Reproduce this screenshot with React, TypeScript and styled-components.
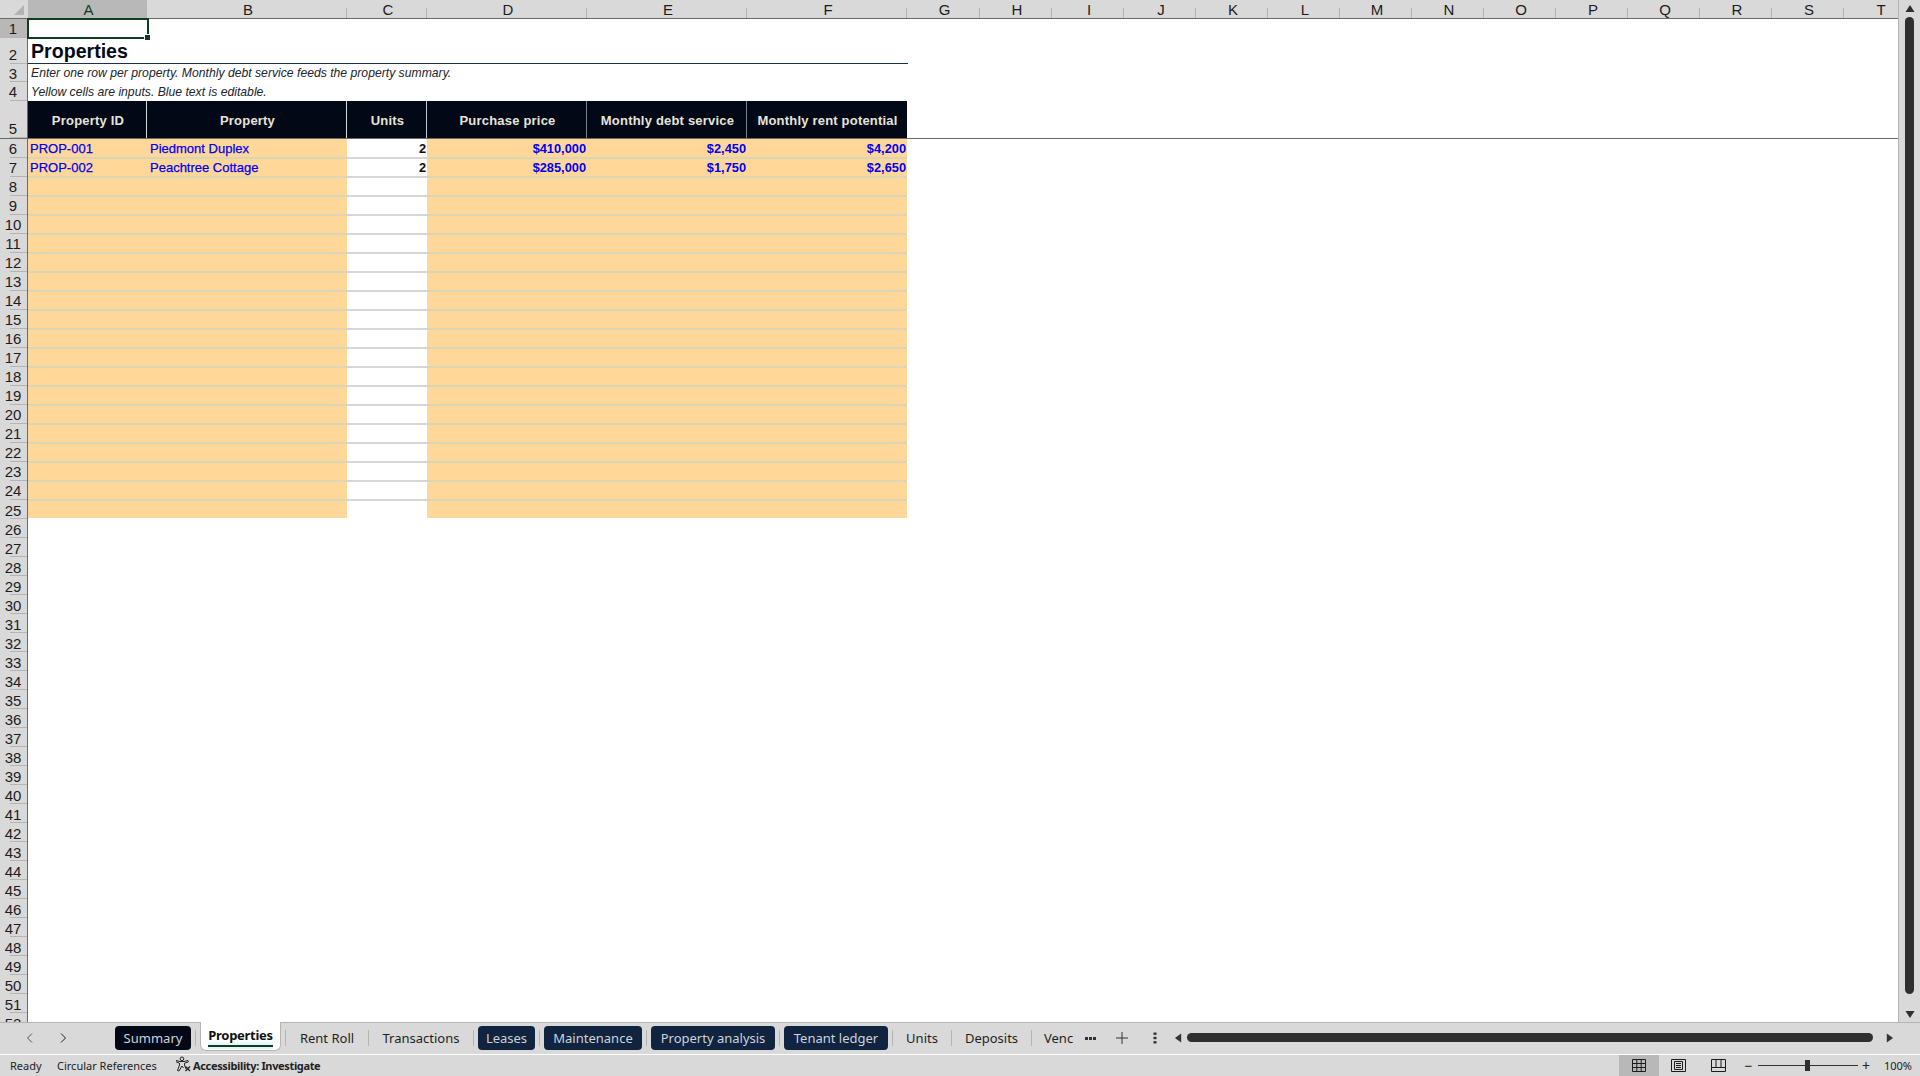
import styled, { createGlobalStyle } from "styled-components";

const GlobalStyle = createGlobalStyle`
  html, body { margin: 0; padding: 0; height: 100%; background: #fff; overflow: hidden; }
  #root { height: 100%; }
  * { box-sizing: border-box; }
`;

const ARIAL = `"Liberation Sans", Arial, sans-serif`;
const UI = `"Noto Sans", "Open Sans", sans-serif`;

const Shell = styled.div`
  width: 1920px;
  height: 1076px;
  display: flex;
  flex-direction: column;
  background: #d9d9d9;
  font-family: ${ARIAL};
  overflow: hidden;
`;

const Main = styled.div`
  height: 1023px;
  display: flex;
  flex: none;
  border-bottom: 1px solid #b4b4b4;
`;

const Sheet = styled.div`
  position: relative;
  width: 1899px;
  background: #fff;
  border-right: 1px solid #b4b4b4;
  overflow: hidden;
`;

const Row = styled.div<{ $h: number; $frozen?: boolean }>`
  display: flex;
  height: ${(p) => p.$h}px;
  ${(p) => p.$frozen && `border-bottom: 1px solid #6a6a6a;`}
`;

const HeaderRow = styled.div`
  display: flex;
  height: 19px;
  background: #d9d9d9;
  border-bottom: 1px solid #6a6a6a;
`;

const Corner = styled.div`
  width: 28px;
  flex: none;
  display: flex;
  justify-content: flex-end;
  align-items: flex-end;
  padding: 0 4px 3px 0;
  &::after {
    content: "";
    width: 0;
    height: 0;
    border-left: 10px solid transparent;
    border-bottom: 10px solid #b3b3b3;
  }
`;

const ColHead = styled.div<{ $w: number; $on?: boolean }>`
  position: relative;
  width: ${(p) => p.$w}px;
  flex: none;
  padding-left: 2px;
  text-align: center;
  font-size: 15px;
  line-height: 19px;
  color: ${(p) => (p.$on ? "#0f3d24" : "#1c1c1c")};
  background: ${(p) => (p.$on ? "#b8b8b8" : "transparent")};
  &::after {
    content: "";
    position: absolute;
    right: 0;
    bottom: 0;
    height: 10px;
    border-right: 1px solid #b4b4b4;
  }
`;

const RowHead = styled.div<{ $on?: boolean; $low?: boolean; $drop?: boolean }>`
  position: relative;
  width: 28px;
  flex: none;
  display: flex;
  justify-content: center;
  align-items: ${(p) => (p.$low ? "flex-end" : "center")};
  padding: ${(p) => (p.$drop ? 2 : 0)}px 1px ${(p) => (p.$low ? 1 : 0)}px 0;
  font-size: 15px;
  line-height: 17px;
  color: #1c1c1c;
  background: ${(p) => (p.$on ? "#b8b8b8" : "#d9d9d9")};
  border-right: 1px solid #6a6a6a;
  &::after {
    content: "";
    position: absolute;
    right: 0;
    bottom: 0;
    width: 17px;
    border-bottom: 1px solid #b4b4b4;
  }
`;

const Cells = styled.div`
  display: flex;
  width: 880px;
  flex: none;
`;

const TitleCell = styled.div`
  width: 880px;
  flex: none;
  height: 26px;
  padding: 1px 0 0 3px;
  font-size: 19.6px;
  line-height: 24px;
  font-weight: 700;
  color: #050a18;
  border-bottom: 1px solid #1b2f56;
`;

const NoteCell = styled.div<{ $lh: number }>`
  flex: none;
  padding-left: 3px;
  font-size: 12.2px;
  line-height: ${(p) => p.$lh}px;
  font-style: italic;
  color: #20242e;
  white-space: nowrap;
`;

const HeadCell = styled.div<{ $w: number; $line: string }>`
  width: ${(p) => p.$w}px;
  flex: none;
  display: flex;
  align-items: center;
  justify-content: center;
  padding: 1px 0 0 2px;
  background: #030817;
  color: #e6e4da;
  font-size: 13px;
  font-weight: 700;
  letter-spacing: 0.2px;
  white-space: nowrap;
  border-right: 1px solid ${(p) => p.$line};
`;

const Cell = styled.div<{ $w: number; $first?: boolean; $last?: boolean; $plain?: boolean; $right?: boolean; $strong?: boolean; $inset?: number }>`
  width: ${(p) => p.$w}px;
  flex: none;
  padding: 0 1px 0 ${(p) => p.$inset ?? 2}px;
  height: ${(p) => (p.$last ? 18 : 19)}px;
  font-size: ${(p) => (p.$strong ? 12.8 : 13)}px;
  line-height: ${(p) => (p.$first ? 20 : 18)}px;
  font-weight: ${(p) => (p.$strong ? 700 : 400)};
  -webkit-text-stroke: ${(p) => (p.$strong ? 0 : 0.25)}px;
  text-align: ${(p) => (p.$right ? "right" : "left")};
  color: ${(p) => (p.$plain ? "#0c0c0c" : "#0000f0")};
  background: ${(p) => (p.$plain ? "#fff" : "#ffd899")};
  white-space: nowrap;
  ${(p) => !p.$first && `border-top: 1px solid ${p.$plain ? "#d6d6d6" : "#d9d6b8"};`}
  ${(p) => !p.$last && `border-bottom: 1px solid ${p.$plain ? "#d6d6d6" : "#d9d6b8"};`}
`;

const Selection = styled.div`
  position: absolute;
  left: 27px;
  top: 18px;
  width: 122px;
  height: 21px;
  border: 2px solid #0f3d24;
  &::after {
    content: "";
    position: absolute;
    right: -3px;
    bottom: -3px;
    width: 5px;
    height: 5px;
    background: #0f3d24;
    outline: 1px solid #fff;
  }
`;

const VScroll = styled.div`
  flex: 1;
  display: flex;
  flex-direction: column;
  align-items: center;
  padding: 4px 0 3px 0;
  color: #2f2f2f;
`;

const VThumb = styled.div`
  width: 9px;
  flex: 1;
  margin: 4px 0 16px;
  border-radius: 5px;
  background: #2f2f2f;
`;

const TabBar = styled.div`
  height: 32px;
  flex: none;
  display: flex;
  align-items: flex-start;
  padding: 3px 0 0 24px;
  border-bottom: 1px solid #fff;
  color: #1c1c1c;
`;

const NavArrows = styled.div`
  width: 91px;
  height: 24px;
  flex: none;
  display: flex;
  align-items: center;
  gap: 21px;
  color: #555;
`;

const Tab = styled.div<{ $w: number; $dark?: string; $clip?: boolean }>`
  width: ${(p) => p.$w}px;
  height: 24px;
  flex: none;
  display: flex;
  align-items: center;
  justify-content: ${(p) => (p.$clip ? "flex-start" : "center")};
  padding-left: ${(p) => (p.$clip ? 12 : 0)}px;
  font-family: ${UI};
  font-size: 13px;
  white-space: nowrap;
  color: ${(p) => (p.$dark ? "#ccd3db" : "#1f1f1f")};
  background: ${(p) => p.$dark || "transparent"};
  border-radius: 4px;
  overflow: hidden;
`;

const ActiveTab = styled.div`
  width: 81px;
  height: 29px;
  margin-top: -4px;
  flex: none;
  display: flex;
  justify-content: center;
  padding: 4px 7px 0;
  background: #fff;
  border: 1px solid #b4b4b4;
  border-top: none;
  border-radius: 0 0 6px 6px;
`;

const ActiveLabel = styled.div`
  width: 100%;
  height: 21px;
  font-family: ${UI};
  font-size: 13px;
  line-height: 18px;
  font-weight: 700;
  text-align: center;
  letter-spacing: -0.3px;
  color: #111;
  background: linear-gradient(transparent 70%, #dff5fa);
  border-bottom: 2px solid #0f3d24;
  box-shadow: 0 2px 0 #dff5fa, -2px 0 0 #fff;
`;

const TabSep = styled.div<{ $l?: number; $r?: number }>`
  width: 1px;
  height: 16px;
  flex: none;
  margin: 4px ${(p) => p.$r ?? 0}px 0 ${(p) => p.$l ?? 0}px;
  background: #b4b4b4;
`;

const More = styled.div`
  width: 28px;
  height: 24px;
  flex: none;
  display: flex;
  justify-content: center;
  align-items: center;
  gap: 1px;
  &::before, &::after, & > i {
    content: "";
    display: block;
    width: 3px;
    height: 3px;
    background: #333;
  }
`;

const TabTool = styled.div<{ $w: number }>`
  width: ${(p) => p.$w}px;
  height: 24px;
  flex: none;
  display: flex;
  justify-content: center;
  align-items: center;
  color: #333;
`;

const HThumb = styled.div`
  width: 686px;
  height: 9px;
  margin-top: 7px;
  flex: none;
  border-radius: 5px;
  background: #2f2f2f;
`;

const StatusBar = styled.div`
  flex: 1;
  display: flex;
  align-items: center;
  padding-left: 10px;
  font-family: ${UI};
  font-size: 11px;
  color: #222;
`;

const StatusText = styled.span<{ $w: number; $bold?: boolean }>`
  width: ${(p) => p.$w}px;
  flex: none;
  white-space: nowrap;
  font-weight: ${(p) => (p.$bold ? 700 : 400)};
  letter-spacing: ${(p) => (p.$bold ? -0.35 : 0)}px;
`;

const ViewButton = styled.div<{ $on?: boolean }>`
  width: 40px;
  height: 100%;
  flex: none;
  display: flex;
  align-items: center;
  justify-content: center;
  background: ${(p) => (p.$on ? "#b8b8b8" : "transparent")};
`;

const ZoomSlider = styled.div`
  position: relative;
  width: 100px;
  height: 1px;
  flex: none;
  background: #333;
  &::after {
    content: "";
    position: absolute;
    left: 47px;
    top: -5px;
    width: 5px;
    height: 11px;
    background: #2f2f2f;
  }
`;

const ZoomGlyph = styled.div<{ $w: number }>`
  width: ${(p) => p.$w}px;
  flex: none;
  text-align: center;
  font-size: 14px;
  line-height: 14px;
  color: #222;
`;

const Percent = styled.div`
  margin: 0 8px 0 10px;
  font-size: 11px;
  white-space: nowrap;
`;

const Spacer = styled.div`
  flex: 1;
`;

const tri = (d: string, w = 10, h = 10) => (
  <svg width={w} height={h} viewBox="0 0 10 10" fill="currentColor"><path d={d} /></svg>
);

const columns: { label: string; w: number }[] = [
  { label: "A", w: 119 },
  { label: "B", w: 200 },
  { label: "C", w: 80 },
  { label: "D", w: 160 },
  { label: "E", w: 160 },
  { label: "F", w: 160 },
  ...("GHIJKLMNOPQRST".split("").map((label, i) => ({ label, w: i === 0 ? 73 : 72 }))),
];

const headers = [
  { t: "Property ID", w: 119, line: "#d6d8dc" },
  { t: "Property", w: 200, line: "#d6d8dc" },
  { t: "Units", w: 80, line: "#c2c8d0" },
  { t: "Purchase price", w: 160, line: "#75818f" },
  { t: "Monthly debt service", w: 160, line: "#75818f" },
  { t: "Monthly rent potential", w: 160, line: "#030817" },
];

const rows = [
  ["PROP-001", "Piedmont Duplex", "2", "$410,000", "$2,450", "$4,200"],
  ["PROP-002", "Peachtree Cottage", "2", "$285,000", "$1,750", "$2,650"],
];

const DataRow = ({ n }: { n: number }) => {
  const d = rows[n - 6] || ["", "", "", "", "", ""];
  const edge = { $first: n === 6, $last: n === 25 };
  return (
    <Row $h={19}>
      <RowHead $drop={n === 25}>{n}</RowHead>
      <Cells>
        <Cell $w={119} {...edge}>{d[0]}</Cell>
        <Cell $w={200} $inset={3} {...edge}>{d[1]}</Cell>
        <Cell $w={80} {...edge} $plain $right $strong>{d[2]}</Cell>
        <Cell $w={160} {...edge} $right $strong>{d[3]}</Cell>
        <Cell $w={160} {...edge} $right $strong>{d[4]}</Cell>
        <Cell $w={160} {...edge} $right $strong>{d[5]}</Cell>
      </Cells>
    </Row>
  );
};

const AccessIcon = () => (
  <svg width="16" height="16" viewBox="0 0 16 16" fill="none" stroke="#222" strokeWidth="1">
    <circle cx="7" cy="2.8" r="1.8" />
    <path d="M1 4.5 L5 5.5 H9 L13 4.5 L13.5 5.8 L9.5 7.2 V9 L11 13 M4.5 7.2 L1 5.8 M4.5 7.2 V9 L2.5 14.5 L4 15 L7 10 L8.5 12" />
    <path d="M10.5 10.5 L15 15 M15 10.5 L10.5 15" strokeWidth="1.3" />
  </svg>
);

const GridIcon = () => (
  <svg width="14" height="13" viewBox="0 0 14 13" fill="none" stroke="#1c1c1c" strokeWidth="1">
    <path d="M.5 .5H13.5V12.5H.5Z M.5 4.5H13.5 M.5 8.5H13.5 M4.8 .5V12.5 M9.2 .5V12.5" />
  </svg>
);

const PageIcon = () => (
  <svg width="15" height="13" viewBox="0 0 15 13" fill="none" stroke="#1c1c1c" strokeWidth="1">
    <path d="M.5 .5H14.5V12.5H.5Z M3.5 2.5H11.5V10.5H3.5Z M5 4.5H10 M5 6.5H10 M5 8.5H10" />
  </svg>
);

const BreakIcon = () => (
  <svg width="15" height="13" viewBox="0 0 15 13" fill="none" stroke="#1c1c1c" strokeWidth="1">
    <path d="M.5 .5H14.5V12.5H.5Z M.5 8.5H14.5 M5 .5V8.5 M10 .5V8.5" />
  </svg>
);

export default function App() {
  return (
    <Shell>
      <GlobalStyle />
      <Main>
        <Sheet>
          <HeaderRow>
            <Corner />
            {columns.map((c) => (
              <ColHead key={c.label} $w={c.w} $on={c.label === "A"}>{c.label}</ColHead>
            ))}
          </HeaderRow>
          <Row $h={19}>
            <RowHead $on>1</RowHead>
          </Row>
          <Row $h={26}>
            <RowHead $low>2</RowHead>
            <TitleCell>Properties</TitleCell>
          </Row>
          <Row $h={18}>
            <RowHead>3</RowHead>
            <NoteCell $lh={19}>Enter one row per property. Monthly debt service feeds the property summary.</NoteCell>
          </Row>
          <Row $h={19}>
            <RowHead>4</RowHead>
            <NoteCell $lh={21}>Yellow cells are inputs. Blue text is editable.</NoteCell>
          </Row>
          <Row $h={38} $frozen>
            <RowHead $low>5</RowHead>
            {headers.map((h) => (
              <HeadCell key={h.t} $w={h.w} $line={h.line}>{h.t}</HeadCell>
            ))}
          </Row>
          {Array.from({ length: 47 }, (_, i) => i + 6).map((n) =>
            n <= 25 ? <DataRow key={n} n={n} /> : (
              <Row $h={19} key={n}><RowHead $drop>{n}</RowHead></Row>
            )
          )}
          <Selection />
        </Sheet>
        <VScroll>
          {tri("M5 1 L10 9 H0Z", 10, 9)}
          <VThumb />
          {tri("M0 1 H10 L5 9Z", 10, 9)}
        </VScroll>
      </Main>
      <TabBar>
        <NavArrows>
          <svg width="12" height="12" viewBox="0 0 12 12" fill="none" stroke="currentColor"><path d="M8 1.5 L3.5 6 L8 10.5" /></svg>
          <svg width="12" height="12" viewBox="0 0 12 12" fill="none" stroke="#222"><path d="M4 1.5 L8.5 6 L4 10.5" /></svg>
        </NavArrows>
        <Tab $w={76} $dark="#030817">Summary</Tab>
        <TabSep $l={4} $r={4} />
        <ActiveTab><ActiveLabel>Properties</ActiveLabel></ActiveTab>
        <TabSep $l={4} />
        <Tab $w={82}>Rent Roll</Tab>
        <TabSep />
        <Tab $w={104}>Transactions</Tab>
        <TabSep $r={4} />
        <Tab $w={57} $dark="#10233f">Leases</Tab>
        <TabSep $l={4} $r={4} />
        <Tab $w={98} $dark="#10233f">Maintenance</Tab>
        <TabSep $l={4} $r={4} />
        <Tab $w={124} $dark="#10233f">Property analysis</Tab>
        <TabSep $l={4} $r={4} />
        <Tab $w={104} $dark="#10233f">Tenant ledger</Tab>
        <TabSep $l={4} />
        <Tab $w={58}>Units</Tab>
        <TabSep />
        <Tab $w={79}>Deposits</Tab>
        <TabSep />
        <Tab $w={44} $clip>Venc</Tab>
        <More><i /></More>
        <TabTool $w={36}>
          <svg width="12" height="12" viewBox="0 0 12 12" stroke="#333" strokeWidth="1"><path d="M6 0V12M0 6H12" /></svg>
        </TabTool>
        <TabTool $w={30}>
          <svg width="4" height="12" viewBox="0 0 4 12" fill="#333"><rect x="0.5" y="0.5" width="3" height="2.4" /><rect x="0.5" y="4.8" width="3" height="2.4" /><rect x="0.5" y="9.1" width="3" height="2.4" /></svg>
        </TabTool>
        <TabTool $w={17}>{tri("M1 5 L8 0 V10Z", 9, 10)}</TabTool>
        <HThumb />
        <TabTool $w={32}>{tri("M2 0 L9 5 L2 10Z", 9, 10)}</TabTool>
      </TabBar>
      <StatusBar>
        <StatusText $w={47}>Ready</StatusText>
        <StatusText $w={118}>Circular References</StatusText>
        <StatusText $w={18}><AccessIcon /></StatusText>
        <StatusText $w={130} $bold>Accessibility: Investigate</StatusText>
        <Spacer />
        <ViewButton $on><GridIcon /></ViewButton>
        <ViewButton><PageIcon /></ViewButton>
        <ViewButton><BreakIcon /></ViewButton>
        <ZoomGlyph $w={19}>−</ZoomGlyph>
        <ZoomSlider />
        <ZoomGlyph $w={16}>+</ZoomGlyph>
        <Percent>100%</Percent>
      </StatusBar>
    </Shell>
  );
}
